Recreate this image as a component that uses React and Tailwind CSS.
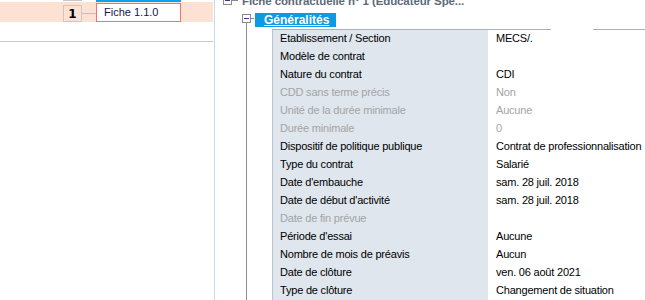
import React from "react";

const rows = [
  ["Etablissement / Section", "MECS/.", false, false],
  ["Modèle de contrat", "", false, false],
  ["Nature du contrat", "CDI", false, false],
  ["CDD sans terme précis", "Non", true, true],
  ["Unité de la durée minimale", "Aucune", true, true],
  ["Durée minimale", "0", true, true],
  ["Dispositif de politique publique", "Contrat de professionnalisation", false, false],
  ["Type du contrat", "Salarié", false, false],
  ["Date d'embauche", "sam. 28 juil. 2018", false, false],
  ["Date de début d'activité", "sam. 28 juil. 2018", false, false],
  ["Date de fin prévue", "", true, true],
  ["Période d'essai", "Aucune", false, false],
  ["Nombre de mois de préavis", "Aucun", false, false],
  ["Date de clôture", "ven. 06 août 2021", false, false],
  ["Type de clôture", "Changement de situation", false, false],
];

const font = { fontFamily: '"Liberation Sans", Arial, sans-serif' };

function MinusBox() {
  return (
    <div className="w-[9px] h-[9px] border border-[#8a8a8a] bg-white flex items-center justify-center shrink-0">
      <div className="w-[5px] h-px bg-[#34349a]" />
    </div>
  );
}

export default function App() {
  return (
    <div
      className="w-[645px] h-[300px] flex overflow-hidden bg-white text-[11px] tracking-[-0.2px]"
      style={font}
    >
      {/* Left panel */}
      <div className="w-[215px] shrink-0 border-r border-[#c3dbea] flex flex-col">
        <div className="h-[2px] flex">
          <div className="ml-[63px] w-[19px] h-px bg-[#c8c8c8]" />
          <div className="ml-[14px] w-[85px] h-[2px] bg-[#0aa4ee]" />
        </div>
        <div className="h-[20px] w-[213px] bg-[#fde2d4] flex items-center">
          <div className="ml-[63px] w-[19px] h-[17px] mt-[3px] border border-[#c8c8c8] flex items-center justify-center font-bold text-[12px] text-black tracking-normal"
            style={{ fontFamily: '"DejaVu Sans", sans-serif' }}>
            1
          </div>
          <div className="w-[14px] h-px bg-[#c0c0c0] mt-[3px]" />
          <div className="w-[85px] h-[19px] mt-px border border-[#f27272] bg-white flex items-center pl-[7px] text-[#14144a] tracking-normal">
            Fiche 1.1.0
          </div>
        </div>
        <div className="mt-[19px] w-[213px] h-px bg-[#c8c8c8]" />
      </div>

      {/* Right panel */}
      <div className="flex-1 flex flex-col min-w-0">
        {/* Title row */}
        <div className="h-[13px] -mt-[5px] flex items-start">
          <div className="ml-[8px] mt-px flex items-center">
            <MinusBox />
            <div className="w-[6px] h-px bg-[#8a8a8a]" />
          </div>
          <div className="ml-[4px] -mt-[2px] font-bold text-[#5b6a79] whitespace-nowrap text-[11.5px] tracking-[-0.1px]">
            Fiche contractuelle n° 1 (Educateur Spe...
          </div>
        </div>
        {/* Section row */}
        <div className="h-[14px] mt-[5px] flex">
          <div className="ml-[27px] flex flex-col pt-px">
            <MinusBox />
            <div className="ml-[4px] w-px flex-1 bg-[#8c8c8c]" />
          </div>
          <div className="w-[3px] h-px bg-[#8a8a8a] mt-[5px]" />
          <div className="ml-px w-[81px] h-[14px] bg-[#0d9ae0] flex items-center pl-[9px]">
            <span className="text-white font-bold underline text-[12px] tracking-[0px] leading-none">
              Généralités
            </span>
          </div>
        </div>
        {/* Body */}
        <div className="flex-1 flex">
          <div className="ml-[31px] w-px bg-[#8c8c8c]" />
          <div className="ml-[25px] flex-1 flex flex-col pt-[2px]">
            <div className="flex h-px">
              <div className="w-[279px] bg-[#a9b2bb]" />
              <div className="w-[42px]" />
              <div className="flex-1 bg-[#a9b2bb]" />
            </div>
            {rows.map(([label, value, lGray, vGray], i) => (
              <div key={i} className="flex h-[18px]">
                <div
                  className={
                    "w-[216px] shrink-0 bg-[#dfe6ed] border-l border-[#bcc5ce] pl-[7px] flex items-center pb-[2px] whitespace-nowrap " +
                    (lGray ? "text-[#a4a4a4]" : "text-black")
                  }
                >
                  {label}
                </div>
                <div
                  className={
                    "pl-[8px] flex items-center pb-[2px] whitespace-nowrap " +
                    (vGray ? "text-[#a4a4a4]" : "text-black")
                  }
                >
                  {value}
                </div>
              </div>
            ))}
            <div className="flex flex-1">
              <div className="w-[216px] bg-[#dfe6ed] border-l border-[#bcc5ce]" />
            </div>
          </div>
        </div>
      </div>
    </div>
  );
}
